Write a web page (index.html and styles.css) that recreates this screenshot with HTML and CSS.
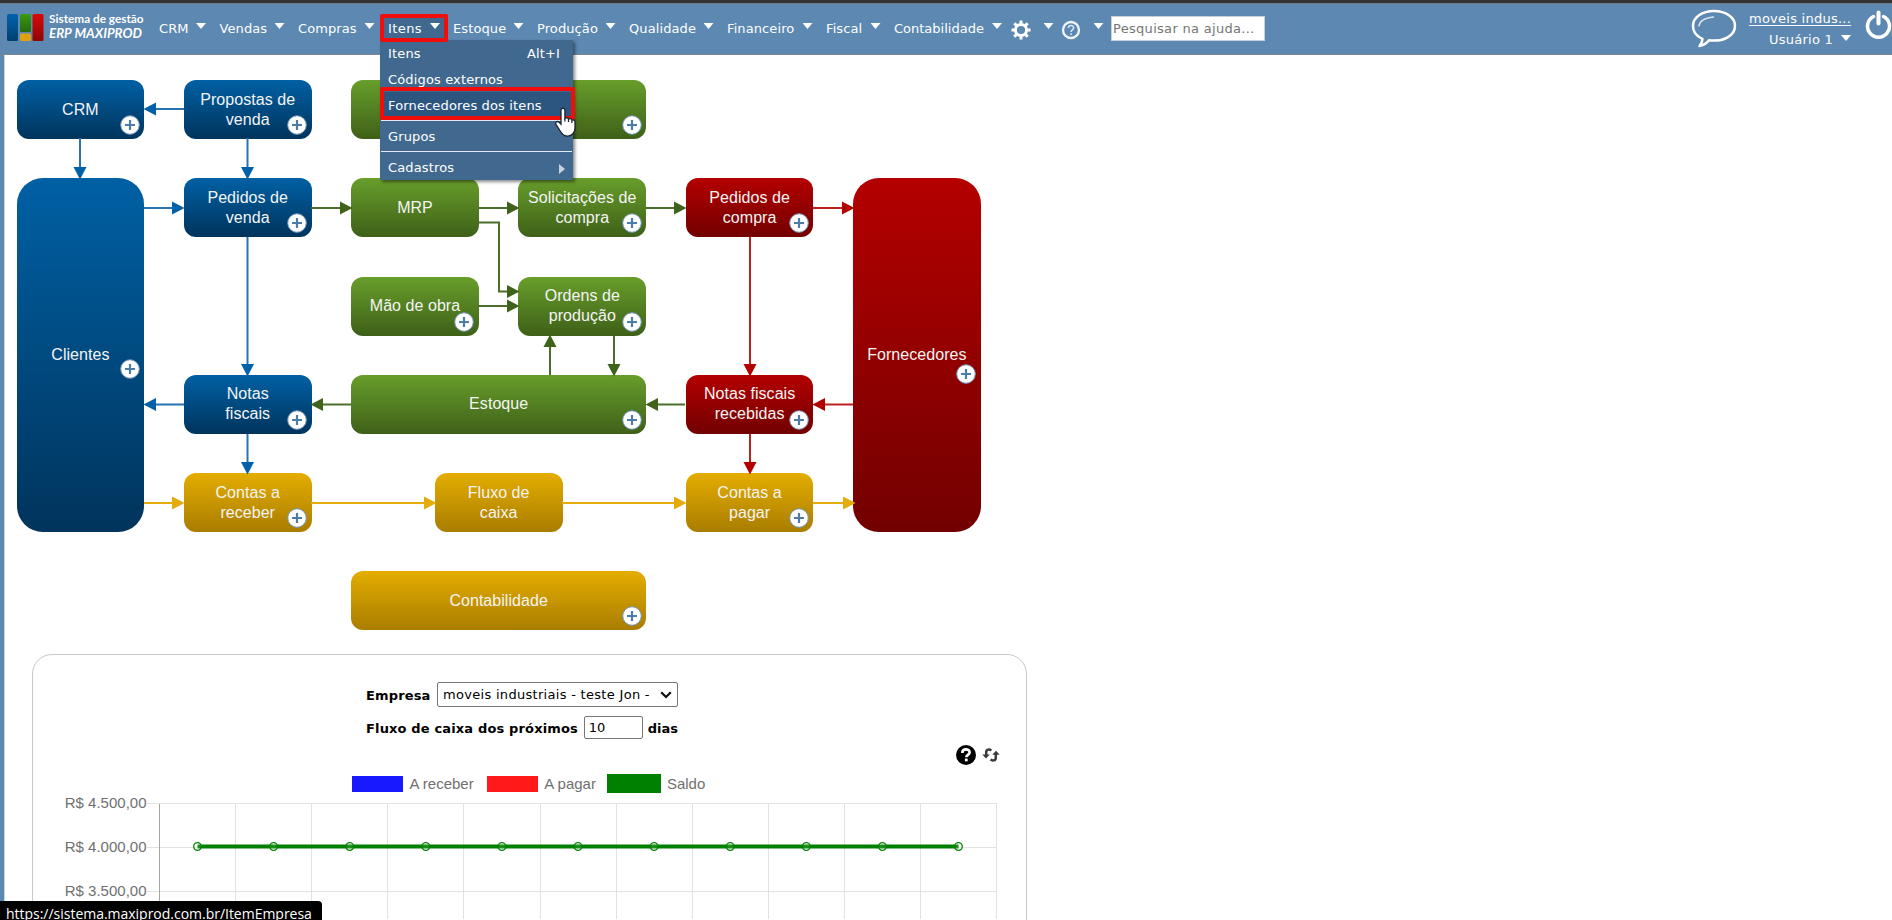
FILE: index.html
```html
<!DOCTYPE html>
<html lang="pt-BR">
<head>
    <meta charset="UTF-8">
    <meta name="viewport" content="width=device-width, initial-scale=1.0">
    <title>ERP MAXIPROD</title>
    <link rel="stylesheet" href="styles.css">
</head>
<body>
    <svg class="defs" width="0" height="0">
        <symbol id="plus" viewBox="0 0 20 20">
            <circle cx="10" cy="10" r="9.3" fill="#fff" stroke="#6f93b8" stroke-width="1"/>
            <path d="M10 5v10M5 10h10" stroke="#4b7cac" stroke-width="2.2"/>
        </symbol>
    </svg>

    <header class="topbar">
        <div class="logo">
            <svg width="37" height="28" viewBox="0 0 37 28">
                <defs>
                    <linearGradient id="lb" x2="0" y2="1"><stop stop-color="#0063ad"/><stop offset="1" stop-color="#00406f"/></linearGradient>
                    <linearGradient id="lg" x2="0" y2="1"><stop stop-color="#3c9a12"/><stop offset="1" stop-color="#256a0c"/></linearGradient>
                    <linearGradient id="lr" x2="0" y2="1"><stop stop-color="#d80808"/><stop offset="1" stop-color="#8d0505"/></linearGradient>
                </defs>
                <rect x="0" y="0" width="11" height="27" rx="1.5" fill="url(#lb)"/>
                <rect x="13" y="0" width="11" height="18" rx="1.5" fill="url(#lg)"/>
                <rect x="13" y="19.5" width="11" height="7.5" rx="1.5" fill="#e0a010"/>
                <rect x="25.5" y="0" width="11" height="27" rx="1.5" fill="url(#lr)"/>
            </svg>
            <div class="logo-text">
                <span>Sistema de gestão</span>
                <em>ERP MAXIPROD</em>
            </div>
        </div>

        <nav class="menu">
            <div class="menu-item">CRM<i class="caret"></i></div>
            <div class="menu-item">Vendas<i class="caret"></i></div>
            <div class="menu-item">Compras<i class="caret"></i></div>
            <div class="menu-item open">Itens<i class="caret"></i>
                <div class="dropdown">
                    <div class="option">Itens<span>Alt+I</span></div>
                    <div class="option">Códigos externos</div>
                    <div class="option selected">Fornecedores dos itens</div>
                    <div class="option group">Grupos</div>
                    <div class="option group">Cadastros<i class="caret-right"></i></div>
                    <div class="mark mark-option"></div>
                    <svg class="cursor" width="24" height="31" viewBox="0 0 24 31">
                        <path d="M7 3.2c0-2.4 3.9-2.4 3.9 0v8.3c.8-1.2 3.3-.9 3.6.7.9-1 3.2-.6 3.4 1 1-.8 3.1-.2 3.1 1.7v6.200c0 4.500-3.200 8-7.300 8-3.800 0-5.700-1.900-7.200-4.600l-4.700-7.300c-1.100-2 1.500-3.500 3-2.100L7 17.200z" fill="#fff" stroke="#1b2430" stroke-width="1.3"/>
                        <path d="M10.900 11.500v3M14.500 12.500v2.500M17.900 13.500v2.500" stroke="#1b2430" stroke-width="1.2"/>
                    </svg>
                </div>
                <div class="mark mark-menu"></div>
            </div>
            <div class="menu-item">Estoque<i class="caret"></i></div>
            <div class="menu-item">Produção<i class="caret"></i></div>
            <div class="menu-item">Qualidade<i class="caret"></i></div>
            <div class="menu-item">Financeiro<i class="caret"></i></div>
            <div class="menu-item">Fiscal<i class="caret"></i></div>
            <div class="menu-item tight">Contabilidade<i class="caret"></i></div>
            <div class="menu-item icon-item">
                <svg width="20" height="20" viewBox="0 0 20 20">
                    <circle cx="10" cy="10" r="5.600" fill="none" stroke="#fff" stroke-width="3"/>
                    <g stroke="#fff" stroke-width="3">
                        <path d="M10 .5v3M10 16.500v3M.5 10h3M16.500 10h3M3.300 3.300l2.100 2.100M14.600 14.600l2.100 2.100M3.300 16.700l2.100-2.100M14.600 5.400l2.100-2.100"/>
                    </g>
                </svg>
                <i class="caret"></i>
            </div>
            <div class="menu-item icon-item">
                <svg width="20" height="20" viewBox="0 0 20 20">
                    <circle cx="10" cy="10" r="8" fill="none" stroke="#eef4fa" stroke-width="2.300"/>
                    <path d="M7.300 8c.1-3.500 5.400-3.300 5.300-.2 0 2-2.500 2-2.500 4.200M10.100 13.200v1.800" fill="none" stroke="#d5e4f2" stroke-width="1.600"/>
                </svg>
                <i class="caret"></i>
            </div>
        </nav>
        <input class="search" type="text" placeholder="Pesquisar na ajuda...">

        <div class="user-area">
            <svg class="chat" width="48" height="42" viewBox="0 0 48 42">
                <path d="M24 3C12 3 3 9.500 3 18c0 5.800 4 10.500 9.500 12.800-.2 3-1.400 5.500-3 7.200 4.500-1 7.500-3 9.500-5.800 14 1.800 26-4.200 26-14.200C45 9.500 36 3 24 3z" fill="none" stroke="#fff" stroke-width="2.500" stroke-linejoin="round"/>
                <path d="M9 18c.5-4.500 5-8 14.500-9" fill="none" stroke="#d8e6f3" stroke-width="1.500" stroke-linecap="round"/>
            </svg>
            <div class="user">
                <a>moveis indus...</a>
                <div>Usuário 1<i class="caret"></i></div>
            </div>
            <svg class="power" width="27" height="30" viewBox="0 0 27 30">
                <path d="M8.500 6.500A11 11 0 1 0 18.500 6.500" fill="none" stroke="#fff" stroke-width="3.500" stroke-linecap="round"/>
                <path d="M13.500 2.500v11" stroke="#fff" stroke-width="4" stroke-linecap="round"/>
            </svg>
        </div>
    </header>

    <main>
        <div class="flow">
            <div class="node blue">CRM<svg class="plus"><use href="#plus"/></svg></div>
            <div class="node blue">Propostas de<br>venda<svg class="plus"><use href="#plus"/></svg></div>
            <div class="node green wide row1"><svg class="plus"><use href="#plus"/></svg></div>

            <div class="node blue tall clientes">Clientes<svg class="plus"><use href="#plus"/></svg></div>
            <div class="node blue c2 row2">Pedidos de<br>venda<svg class="plus"><use href="#plus"/></svg></div>
            <div class="node green c3 row2">MRP</div>
            <div class="node green c4 row2">Solicitações de<br>compra<svg class="plus"><use href="#plus"/></svg></div>
            <div class="node red c5 row2">Pedidos de<br>compra<svg class="plus"><use href="#plus"/></svg></div>
            <div class="node red tall fornecedores">Fornecedores<svg class="plus"><use href="#plus"/></svg></div>

            <div class="node green c3 row3">Mão de obra<svg class="plus"><use href="#plus"/></svg></div>
            <div class="node green c4 row3">Ordens de<br>produção<svg class="plus"><use href="#plus"/></svg></div>

            <div class="node blue c2 row4">Notas<br>fiscais<svg class="plus"><use href="#plus"/></svg></div>
            <div class="node green wide row4">Estoque<svg class="plus"><use href="#plus"/></svg></div>
            <div class="node red c5 row4">Notas fiscais<br>recebidas<svg class="plus"><use href="#plus"/></svg></div>

            <div class="node yellow c2 row5">Contas a<br>receber<svg class="plus"><use href="#plus"/></svg></div>
            <div class="node yellow caixa row5">Fluxo de<br>caixa</div>
            <div class="node yellow c5 row5">Contas a<br>pagar<svg class="plus"><use href="#plus"/></svg></div>

            <div class="node yellow wide row6">Contabilidade<svg class="plus"><use href="#plus"/></svg></div>

            <svg class="arrows" width="1000" height="640" viewBox="0 0 1000 640">
                <defs>
                    <marker id="mb" markerUnits="userSpaceOnUse" markerWidth="13" markerHeight="14" refX="0" refY="7" orient="auto"><path d="M0 .5L12.500 7 0 13.500z" fill="#0060a8"/></marker>
                    <marker id="mg" markerUnits="userSpaceOnUse" markerWidth="13" markerHeight="14" refX="0" refY="7" orient="auto"><path d="M0 .5L12.500 7 0 13.500z" fill="#3f631b"/></marker>
                    <marker id="mr" markerUnits="userSpaceOnUse" markerWidth="13" markerHeight="14" refX="0" refY="7" orient="auto"><path d="M0 .5L12.500 7 0 13.500z" fill="#b20000"/></marker>
                    <marker id="my" markerUnits="userSpaceOnUse" markerWidth="13" markerHeight="14" refX="0" refY="7" orient="auto"><path d="M0 .5L12.500 7 0 13.500z" fill="#e4ab0b"/></marker>
                </defs>
                <g class="line-blue">
                    <path d="M184 109H156"/>
                    <path d="M80 138V167"/>
                    <path d="M247.500 138V167"/>
                    <path d="M144 208H172"/>
                    <path d="M247.500 237V364"/>
                    <path d="M184 404.500H156"/>
                    <path d="M247.500 434V462"/>
                </g>
                <g class="line-green">
                    <path d="M311 208H340"/>
                    <path d="M478 208H507"/>
                    <path d="M478 222.500H499V291.500H507"/>
                    <path d="M478 306H507"/>
                    <path d="M646 208H674"/>
                    <path d="M550 375V347"/>
                    <path d="M614 336V364"/>
                    <path d="M351 404.500H323"/>
                    <path d="M685 404.500H658"/>
                </g>
                <g class="line-red">
                    <path d="M813 208H842"/>
                    <path d="M750 237V364"/>
                    <path d="M853 404.500H825"/>
                    <path d="M750 434V462"/>
                </g>
                <g class="line-yellow">
                    <path d="M144 503H172"/>
                    <path d="M311 503H424"/>
                    <path d="M562 503H674"/>
                    <path d="M813 503H843"/>
                </g>
            </svg>
        </div>

        <section class="panel">
            <form class="filters">
                <div class="field"><label>Empresa</label>
                    <div class="select">moveis industriais - teste Jon -
                        <svg width="12" height="8" viewBox="0 0 12 8"><path d="M1.200 1.200L6 6l4.800-4.800" fill="none" stroke="#111" stroke-width="2.200"/></svg>
                    </div>
                </div>
                <div class="field days"><label>Fluxo de caixa dos próximos</label><input type="text" value="10"><label>dias</label></div>
            </form>
            <div class="tools">
                <svg width="20" height="20" viewBox="0 0 20 20">
                    <circle cx="10" cy="10" r="10" fill="#000"/>
                    <path d="M6.300 8C6.300 3.200 13.700 3.400 13.600 7.400c0 2.500-3.300 2.300-3.300 4.800" fill="none" stroke="#fff" stroke-width="2.700"/>
                    <rect x="8.900" y="13.600" width="2.800" height="2.700" fill="#fff"/>
                </svg>
                <svg width="18" height="14" viewBox="0 0 18 14">
                    <path d="M9.200 2.600C7.500.8 4.200 1.200 4.200 4.300v3.200M8.600 11.400c1.700 1.800 5.200 1.400 5.200-1.700V5.500" fill="none" stroke="#3a3a3a" stroke-width="2.500"/>
                    <path d="M.3 6.500h7.400L4 10.500zM10.300 6.700h7.400L14 2.700z" fill="#3a3a3a"/>
                </svg>
            </div>
            <div class="legend">
                <span class="swatch receber"></span><span>A receber</span>
                <span class="swatch pagar"></span><span>A pagar</span>
                <span class="swatch saldo"></span><span>Saldo</span>
            </div>
            <svg class="chart" width="960" height="130" viewBox="50 790 960 130">
                <g class="grid" id="grid"></g>
                <path d="M159.500 805V920" stroke="#a6a6a6"/>
                <g class="axis">
                    <text x="146.500" y="809">R$ 4.500,00</text>
                    <text x="146.500" y="853">R$ 4.000,00</text>
                    <text x="146.500" y="897">R$ 3.500,00</text>
                </g>
                <path d="M197.500 847.500H958.500" stroke="#008000" stroke-width="4"/>
                <g id="points" fill="rgba(255,255,255,.1)" stroke="#008000" stroke-width="1.300"></g>
            </svg>
        </section>
    </main>

    <div class="status">https://sistema.maxiprod.com.br/ItemEmpresa</div>

    <script>
        const ns = "http://www.w3.org/2000/svg";
        const step = 76.1;

        function add(parent, tag, attrs) {
            const el = document.createElementNS(ns, tag);
            for (const key in attrs) el.setAttribute(key, attrs[key]);
            document.getElementById(parent).appendChild(el);
        }

        [804.5, 848.5, 892.5].forEach(y => add("grid", "path", { d: `M147 ${y}H997` }));
        for (let i = 1; i <= 11; i++) {
            add("grid", "path", { d: `M${Math.floor(159.5 + i * step) + 0.5} 805V920` });
            add("points", "circle", { cx: 197.5 + (i - 1) * step, cy: 847.5, r: 3.8 });
        }
    </script>
</body>
</html>
```
FILE: styles.css
```css
* {
    box-sizing: border-box;
}
body {
    margin: 0;
    height: 920px;
    overflow: hidden;
    background: #fff;
    font-family: Verdana, "DejaVu Sans", sans-serif;
    font-size: 13px;
    position: relative;
}
.defs {
    position: absolute;
}
.topbar {
    height: 55px;
    background: #5c88b1;
    border-top: 3px solid #333;
    border-bottom: 1px solid #7d858c;
    box-shadow: inset 0 1px #707a82;
    color: #fff;
    display: flex;
    align-items: flex-start;
    position: relative;
    z-index: 2;
}
.logo {
    display: flex;
    width: 159px;
    padding: 11px 0 0 7px;
    gap: 5px;
}
.logo-text {
    font-family: Lato, sans-serif;
    font-weight: bold;
    font-size: 11.8px;
    line-height: 15px;
    margin-top: -3px;
    white-space: nowrap;
}
.logo-text span,
.logo-text em {
    display: block;
}
.logo-text em {
    font-size: 13.3px;
}
.menu {
    display: grid;
    grid-template-columns: 60.5px 78.5px 90px 65px 84px 92px 98px 99px 68px 117px 50px 50px;
    padding-top: 12px;
}
.menu-item {
    display: flex;
    justify-content: space-between;
    height: 26px;
    line-height: 28px;
    padding-right: 13.5px;
    position: relative;
    letter-spacing: 0.1px;
}
.tight {
    letter-spacing: 0;
    padding-right: 9px;
}
.icon-item {
    padding-right: 7.5px;
}
.icon-item svg {
    margin-top: 5px;
}
.caret {
    width: 10px;
    height: 6px;
    margin-top: 8px;
    background: #fff;
    clip-path: polygon(0 0, 100% 0, 50% 100%);
}
.open {
    background: #41698f;
    margin-left: -8px;
    padding-left: 8px;
    margin-right: 5px;
    padding-right: 8px;
    letter-spacing: 0.4px;
}
.dropdown {
    position: absolute;
    left: 0;
    top: 25px;
    width: 193px;
    height: 140px;
    background: #41698f;
    box-shadow: 2px 2px 3px rgba(0, 0, 0, 0.45);
}
.option {
    display: flex;
    justify-content: space-between;
    height: 26px;
    line-height: 27px;
    padding: 0 13px 0 8px;
    letter-spacing: 0.15px;
}
.option.selected {
    background: #2c5680;
    height: 28px;
}
.option.group {
    margin: 0 1px;
    padding-left: 7px;
    padding-right: 7px;
    height: 31px;
    line-height: 32px;
    border-top: 1px solid #e3ebf2;
}
.caret-right {
    width: 6px;
    height: 10px;
    margin-top: 12px;
    background: #c8d2dc;
    clip-path: polygon(0 0, 100% 50%, 0 100%);
}
.mark {
    position: absolute;
    border: 4px solid #f20d0d;
    border-radius: 2px;
}
.mark-menu {
    left: 0;
    top: -1px;
    width: 68px;
    height: 28px;
}
.mark-option {
    left: 0;
    top: 47px;
    width: 195px;
    height: 33px;
}
.cursor {
    position: absolute;
    left: 174px;
    top: 67px;
}
.search {
    width: 154px;
    height: 25px;
    margin-top: 13px;
    padding: 0 1px;
    border: 1px solid #c5d0da;
    font: 13px Verdana, "DejaVu Sans", sans-serif;
    letter-spacing: 0.3px;
}
.search::placeholder {
    color: #757575;
}
.user-area {
    margin-left: auto;
    display: flex;
    align-items: flex-start;
}
.chat {
    margin-top: 5px;
}
.user {
    width: 113px;
    padding: 6px 0 0 11px;
    line-height: 21px;
    text-align: right;
    white-space: nowrap;
    letter-spacing: 0.25px;
}
.user a {
    display: block;
    line-height: 20px;
    text-decoration: underline;
    text-underline-offset: 2px;
}
.user .caret {
    display: inline-block;
    margin: 0 0 3px 8px;
}
.power {
    margin: 7px 0 0 14px;
    width: 27px;
}
main {
    height: 865px;
    overflow: hidden;
    border-left: 4px solid #5c88b1;
    box-shadow: inset 1px 0 #ccd4dc;
}
.flow {
    display: grid;
    grid-template-columns: repeat(6, 127.8px);
    grid-template-rows: repeat(6, 59px);
    column-gap: 39.5px;
    row-gap: 39.3px;
    padding: 25px 0 0 12.5px;
    font-family: Arial, "Liberation Sans", sans-serif;
    font-size: 16px;
    line-height: 20px;
    letter-spacing: 0.05px;
    color: #f4f4f4;
    position: relative;
}
.node {
    display: flex;
    align-items: center;
    justify-content: center;
    text-align: center;
    border-radius: 12px;
    position: relative;
}
.plus {
    position: absolute;
    right: 4.5px;
    bottom: 4px;
    width: 20px;
    height: 20px;
}
.blue {
    background: linear-gradient(#0060a4, #00345c);
}
.green {
    background: linear-gradient(#689e2b, #3e6018);
}
.red {
    background: linear-gradient(#b40000, #720000);
}
.yellow {
    background: linear-gradient(#e4ad00, #a97d00);
}
.wide {
    grid-column: 3 / span 2;
}
.tall {
    grid-row: 2 / span 4;
    border-radius: 26px;
}
.clientes {
    grid-column: 1;
}
.fornecedores {
    grid-column: 6;
}
.clientes .plus {
    bottom: 153px;
}
.fornecedores .plus {
    bottom: 148px;
}
.c2 { grid-column: 2; }
.c3 { grid-column: 3; }
.c4 { grid-column: 4; }
.c5 { grid-column: 5; }
.row1 { grid-row: 1; }
.row2 { grid-row: 2; }
.row3 { grid-row: 3; }
.row4 { grid-row: 4; }
.row5 { grid-row: 5; }
.row6 { grid-row: 6; }
.caixa {
    grid-column: 3 / span 2;
    justify-self: center;
    width: 128px;
}
/* connectors drawn over the grid */
.arrows {
    position: absolute;
    left: -4px;
    top: -55px;
    fill: none;
    stroke-width: 2;
}
.line-blue { stroke: #2672b2; }
.line-green { stroke: #4c6e2b; }
.line-red { stroke: #bd2020; }
.line-yellow { stroke: #e4ab0b; }
.line-blue path { marker-end: url(#mb); }
.line-green path { marker-end: url(#mg); }
.line-red path { marker-end: url(#mr); }
.line-yellow path { marker-end: url(#my); }

.panel {
    width: 995px;
    height: 400px;
    margin: 23.500px 0 0 28px;
    border: 1px solid #c8c8c8;
    border-radius: 20px;
    padding-top: 27px;
}
.filters {
    width: 312px;
    margin-left: 333px;
}
.field {
    display: flex;
    align-items: center;
    height: 25px;
    font-weight: bold;
}
.field label {
    letter-spacing: 0.15px;
    padding-top: 2px;
}
.select {
    display: flex;
    align-items: center;
    justify-content: space-between;
    width: 241px;
    height: 25px;
    margin-left: auto;
    border: 1px solid #767676;
    border-radius: 2px;
    padding: 1px 5px 0;
    font-weight: normal;
    letter-spacing: 0.3px;
    white-space: nowrap;
}
.days {
    margin-top: 8px;
    white-space: nowrap;
}
.days input {
    width: 59px;
    height: 23px;
    margin: 0 5px 0 auto;
    border: 1px solid #767676;
    border-radius: 2px;
    padding: 0 4px;
    font: 13px Verdana, "DejaVu Sans", sans-serif;
}
.days label:last-child {
    letter-spacing: 0;
}
.tools {
    display: flex;
    align-items: center;
    gap: 6px;
    margin: 5px 0 0 923px;
    height: 20px;
}
.legend {
    display: flex;
    align-items: center;
    height: 20px;
    margin: 9px 0 0 319px;
    font: 15px Arial, "Liberation Sans", sans-serif;
    color: #707070;
}
.legend span:not(.swatch) {
    margin-top: -1px;
}
.swatch {
    width: 51px;
    height: 16px;
    margin-right: 6.500px;
}
.receber {
    background: #1919ff;
}
.pagar {
    background: #ff1919;
    margin-left: 13px;
}
.saldo {
    background: #008000;
    width: 54px;
    height: 19px;
    margin-left: 11px;
    margin-right: 6px;
}
.chart {
    display: block;
    margin: -5px 0 0 17px;
}
.grid {
    stroke: #e2e2e2;
}
.axis {
    font: 15px Arial, "Liberation Sans", sans-serif;
    fill: #707070;
    text-anchor: end;
}
.status {
    position: absolute;
    left: 0;
    bottom: 0;
    width: 322px;
    height: 19px;
    padding-left: 6px;
    overflow: hidden;
    background: #000;
    border-top-right-radius: 4px;
    color: #fff;
    font: 14px/26px "Open Sans", sans-serif;
    letter-spacing: -0.02px;
    white-space: nowrap;
    z-index: 3;
}
```
